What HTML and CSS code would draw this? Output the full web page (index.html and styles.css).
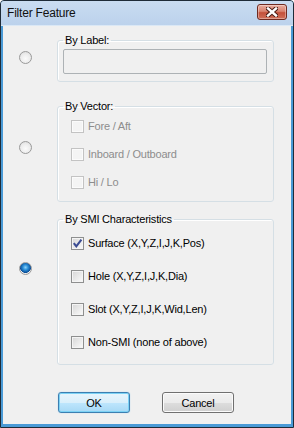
FILE: index.html
```html
<!DOCTYPE html>
<html lang="en">
<head>
    <meta charset="UTF-8">
    <meta name="viewport" content="width=device-width, initial-scale=1.0">
    <title>Filter Feature</title>
    <link rel="stylesheet" href="styles.css">
</head>
<body>

    <div class="window">
        <div class="titlebar">
            <span class="title">Filter Feature</span>
            <button class="close-btn" title="Close">
                <svg width="12" height="10" viewBox="0 0 12 10">
                    <path d="M2 1.5 L10 8.5 M10 1.5 L2 8.5" stroke="#4b1c14" stroke-width="4.4" stroke-linecap="square"/>
                    <path d="M2 1.5 L10 8.5 M10 1.5 L2 8.5" stroke="#ffffff" stroke-width="2.4" stroke-linecap="square"/>
                </svg>
            </button>
        </div>

        <div class="client">
            <!-- By label -->
            <div class="option option-label">
                <span class="radio"></span>
                <fieldset class="group">
                    <legend>By Label:</legend>
                    <input type="text" class="label-input" disabled>
                </fieldset>
            </div>

            <!-- By vector -->
            <div class="option option-vector">
                <span class="radio"></span>
                <fieldset class="group">
                    <legend>By Vector:</legend>
                    <div class="check-list check-list-vector">
                        <div class="check-row disabled"><span class="check"></span>Fore / Aft</div>
                        <div class="check-row disabled"><span class="check"></span>Inboard / Outboard</div>
                        <div class="check-row disabled"><span class="check"></span>Hi / Lo</div>
                    </div>
                </fieldset>
            </div>

            <!-- By SMI characteristics -->
            <div class="option option-smi">
                <span class="radio checked"></span>
                <fieldset class="group">
                    <legend>By SMI Characteristics</legend>
                    <div class="check-list check-list-smi">
                        <div class="check-row">
                            <span class="check">
                                <svg width="11" height="11" viewBox="0 0 11 11">
                                    <path d="M1.8 5.2 L4.3 8.3 L9.4 1.6" fill="none" stroke="#3b4c93" stroke-width="2.1"/>
                                </svg>
                            </span>Surface (X,Y,Z,I,J,K,Pos)
                        </div>
                        <div class="check-row"><span class="check"></span>Hole (X,Y,Z,I,J,K,Dia)</div>
                        <div class="check-row"><span class="check"></span>Slot (X,Y,Z,I,J,K,Wid,Len)</div>
                        <div class="check-row"><span class="check"></span>Non-SMI (none of above)</div>
                    </div>
                </fieldset>
            </div>

            <div class="buttons">
                <button class="btn btn-default">OK</button>
                <button class="btn">Cancel</button>
            </div>
        </div>
    </div>

</body>
</html>
```

FILE: styles.css
```css
body {
    margin: 0;
    font-family: "Liberation Sans", Arial, sans-serif;
    font-size: 11px;
    letter-spacing: -0.2px;
    background-color: #ffffff;
}

.window {
    width: 294px;
    height: 428px;
    box-sizing: border-box;
    border: 1px solid #1e2b38;
    border-radius: 4px 4px 0 0;
    background-color: #4a9ad6;
    padding: 0 2px 3px;
    display: flex;
    flex-direction: column;
    overflow: hidden;
}

.titlebar {
    height: 25px;
    box-sizing: border-box;
    margin: 0 -2px;
    padding: 0 6px;
    display: flex;
    justify-content: space-between;
    align-items: flex-start;
    background: linear-gradient(#c9dcf1, #bcd2ec);
    border-bottom: 1px solid #dbe8f5;
}

.title {
    font-size: 12px;
    line-height: 24px;
    color: #111;
}

.close-btn {
    width: 30px;
    height: 16px;
    margin-top: 3px;
    padding: 0;
    border: 1px solid #6f2a20;
    border-radius: 3px;
    background: linear-gradient(#e9ad9f 0%, #d98370 45%, #c4503a 55%, #d0705a 100%);
    box-shadow: inset 0 0 0 1px rgba(255, 255, 255, 0.35);
    display: flex;
    justify-content: center;
    align-items: center;
}

.client {
    flex: 1;
    background-color: #f0f0f0;
    padding: 8px 0 0 16px;
}

.option {
    display: flex;
    align-items: flex-start;
}

.option-vector {
    margin-top: 18px;
}

.option-smi {
    margin-top: 11px;
}

.radio {
    width: 13px;
    height: 13px;
    box-sizing: border-box;
    flex-shrink: 0;
    margin-right: 25px;
    border-radius: 50%;
    border: 1px solid #9a9a9a;
    background: radial-gradient(circle at 50% 60%, #fbfbfb 0%, #ececec 55%, #d4d4d4 100%);
}

.option-label .radio {
    margin-top: 17px;
}

.option-vector .radio {
    margin-top: 41px;
}

.option-smi .radio {
    margin-top: 49px;
}

.radio.checked {
    background:
        radial-gradient(circle at 50% 40%, #8fd2f7 0%, #2a8fd8 30%, #0b4d96 62%, transparent 66%),
        radial-gradient(circle at 50% 60%, #fbfbfb 0%, #ececec 55%, #d4d4d4 100%);
}

.group {
    width: 217px;
    box-sizing: border-box;
    margin: 0;
    padding: 0 6px 0 5px;
    min-width: 0;
    border: 1px solid #d5dfe5;
    border-radius: 3px;
    box-shadow: inset 1px 1px 0 #ffffff;
}

.group legend {
    padding: 0 2px;
    line-height: 13px;
    color: #000;
}

.label-input {
    display: block;
    width: 100%;
    height: 25px;
    box-sizing: border-box;
    margin: 2px 0 7px;
    border: 1px solid #adb2b5;
    border-radius: 2px;
    background-color: #f0f0f0;
}

.check-list {
    display: flex;
    flex-direction: column;
    padding-left: 8px;
}

.check-list-vector {
    gap: 12px;
    padding-top: 5px;
    padding-bottom: 11px;
}

.check-list-smi {
    gap: 17px;
    padding-top: 9px;
    padding-bottom: 14px;
}

.check-row {
    height: 16px;
    display: flex;
    align-items: center;
    gap: 4px;
    color: #000;
}

.check {
    width: 13px;
    height: 13px;
    box-sizing: border-box;
    flex-shrink: 0;
    border: 1px solid #8e8f8f;
    background: linear-gradient(135deg, #d6d6d6, #fbfbfb);
    box-shadow: inset 0 0 0 1px #f4f4f4;
    display: flex;
    justify-content: center;
    align-items: center;
}

.check-row.disabled {
    color: #8d8d8d;
}

.check-row.disabled .check {
    border-color: #c3c3c3;
    background: #f4f4f4;
    box-shadow: inset 0 0 0 1px #fbfbfb;
}

.buttons {
    display: flex;
    gap: 32px;
    margin-top: 27px;
    padding-left: 39px;
}

.btn {
    width: 72px;
    height: 21px;
    padding: 0;
    font-family: "Liberation Sans", Arial, sans-serif;
    font-size: 11px;
    letter-spacing: -0.2px;
    color: #000;
    border: 1px solid #707070;
    border-radius: 3px;
    background: linear-gradient(#f2f2f2 0%, #ebebeb 50%, #dddddd 51%, #cfcfcf 100%);
    box-shadow: inset 0 0 0 1px #fbfbfb;
}

.btn-default {
    border-color: #3c7fb1;
    background: linear-gradient(#e8f5fc 0%, #d9effb 50%, #bee6fd 51%, #a7d9f5 100%);
    box-shadow: inset 0 0 0 1px #7cd2f5, 0 0 1px #7fc4ee;
}
```
